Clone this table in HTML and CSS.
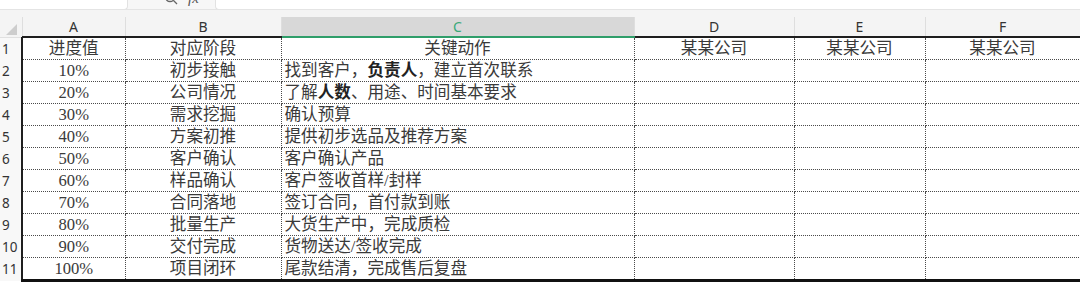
FILE: index.html
```html
<!DOCTYPE html>
<html lang="zh-CN">
<head>
<meta charset="utf-8">
<title>Sheet</title>
<link rel="stylesheet" href="styles.css">
</head>
<body>
<div class="toolbar">
  <div class="toolbar-inner">
    <div class="namebox">C17</div>
    <div class="fx-area">
      <svg class="search" width="14" height="14" viewBox="0 0 14 14"><circle cx="6" cy="6" r="4.5" fill="none" stroke="#666" stroke-width="1.3"/><line x1="9.3" y1="9.3" x2="13" y2="13" stroke="#666" stroke-width="1.3"/></svg>
      <span class="fx">fx</span>
    </div>
    <div class="formula"></div>
  </div>
</div>
<div class="band"></div>
<table class="sheet">
  <colgroup>
    <col class="c-rh"><col class="c-a"><col class="c-b"><col class="c-c"><col class="c-d"><col class="c-e"><col class="c-f">
  </colgroup>
  <thead>
    <tr class="colhead">
      <th class="corner"><span class="tri"></span></th>
      <th>A</th><th>B</th><th class="active">C</th><th>D</th><th>E</th><th>F</th>
    </tr>
  </thead>
  <tbody>
    <tr><td class="rh">1</td><td class="ctr">进度值</td><td class="ctr">对应阶段</td><td class="ctr">关键动作</td><td class="ctr">某某公司</td><td class="ctr">某某公司</td><td class="ctr">某某公司</td></tr>
    <tr><td class="rh">2</td><td class="ctr">10%</td><td class="ctr">初步接触</td><td class="txt">找到客户，<b>负责人</b>，建立首次联系</td><td></td><td></td><td></td></tr>
    <tr><td class="rh">3</td><td class="ctr">20%</td><td class="ctr">公司情况</td><td class="txt">了解<b>人数</b>、用途、时间基本要求</td><td></td><td></td><td></td></tr>
    <tr><td class="rh">4</td><td class="ctr">30%</td><td class="ctr">需求挖掘</td><td class="txt">确认预算</td><td></td><td></td><td></td></tr>
    <tr><td class="rh">5</td><td class="ctr">40%</td><td class="ctr">方案初推</td><td class="txt">提供初步选品及推荐方案</td><td></td><td></td><td></td></tr>
    <tr><td class="rh">6</td><td class="ctr">50%</td><td class="ctr">客户确认</td><td class="txt">客户确认产品</td><td></td><td></td><td></td></tr>
    <tr><td class="rh">7</td><td class="ctr">60%</td><td class="ctr">样品确认</td><td class="txt">客户签收首样/封样</td><td></td><td></td><td></td></tr>
    <tr><td class="rh">8</td><td class="ctr">70%</td><td class="ctr">合同落地</td><td class="txt">签订合同，首付款到账</td><td></td><td></td><td></td></tr>
    <tr><td class="rh">9</td><td class="ctr">80%</td><td class="ctr">批量生产</td><td class="txt">大货生产中，完成质检</td><td></td><td></td><td></td></tr>
    <tr><td class="rh">10</td><td class="ctr">90%</td><td class="ctr">交付完成</td><td class="txt">货物送达/签收完成</td><td></td><td></td><td></td></tr>
    <tr class="last"><td class="rh">11</td><td class="ctr">100%</td><td class="ctr">项目闭环</td><td class="txt">尾款结清，完成售后复盘</td><td></td><td></td><td></td></tr>
  </tbody>
</table>
</body>
</html>
```
FILE: styles.css
```css
html, body {
  margin: 0;
  padding: 0;
  background: #ffffff;
  overflow: hidden;
  width: 1080px;
  height: 283px;
}

.toolbar {
  height: 9px;
  overflow: hidden;
  background: #f7f7f7;
  border-bottom: 1px solid #e4e4e4;
}
.toolbar-inner {
  display: flex;
  height: 26px;
  margin-top: -16px;
  font-family: "Noto Sans", "Liberation Sans", sans-serif;
  font-size: 13px;
  color: #444;
}
.namebox {
  width: 128px;
  background: #fff;
  border-right: 1px solid #e2e2e2;
  border-bottom: 1px solid #e2e2e2;
  border-radius: 0 0 4px 0;
  text-align: center;
  line-height: 22px;
  box-sizing: border-box;
  padding-right: 20px;
}
.fx-area {
  width: 87px;
  display: flex;
  align-items: center;
  padding-left: 36px;
  gap: 10px;
  box-sizing: border-box;
  padding-top: 2px;
}
.fx {
  font-family: "Liberation Serif", serif;
  font-style: italic;
  font-size: 15px;
  color: #555;
}
.formula {
  flex: 1;
  background: #fff;
  border-left: 1px solid #e2e2e2;
  border-bottom: 1px solid #e2e2e2;
  border-radius: 0 0 0 4px;
}

.band {
  height: 7px;
  background: #f4f4f4;
}

.sheet {
  width: 1080px;
  table-layout: fixed;
  border-collapse: collapse;
  border-spacing: 0;
}
.c-rh { width: 22px; }
.c-a { width: 103px; }
.c-b { width: 156px; }
.c-c { width: 353px; }
.c-d { width: 160px; }
.c-e { width: 131px; }
.c-f { width: 155px; }

.colhead th {
  height: 18px;
  padding: 0;
  background: #f4f4f4;
  font-family: "Noto Sans", "Liberation Sans", sans-serif;
  font-weight: normal;
  font-size: 14px;
  line-height: 18px;
  color: #333;
  border-bottom: 2px solid #1e1e1e;
  border-left: 1px solid #dedede;
  padding-top: 1px;
}
.colhead th.corner {
  border-left: none;
  position: relative;
  border-bottom: 1px solid #e0e0e0;
}
.tri {
  position: absolute;
  left: 6px;
  bottom: 2px;
  width: 0;
  height: 0;
  border-left: 11px solid transparent;
  border-bottom: 11px solid #cdcdcd;
}
.colhead th.active {
  background: #d8d8d8;
  color: #3aa878;
  border-bottom: 2px solid #2f9e6a;
}

tbody td {
  height: 21px;
  padding: 0;
  border: 1px dotted #4a4a4a;
  font-family: "Liberation Serif", "Noto Sans CJK SC", serif;
  font-size: 16.6px;
  line-height: 20px;
  color: #3a3a3a;
  white-space: nowrap;
  overflow: hidden;
}
tbody td.rh {
  border: none;
  border-right: 2px solid #1e1e1e;
  background: #f8f8f8;
  font-family: "Noto Sans", "Liberation Sans", sans-serif;
  font-size: 13.5px;
  color: #333;
  padding-left: 2px;
  text-align: left;
}
tbody td.ctr { text-align: center; }
tbody td.txt { text-align: left; padding-left: 3px; }
tbody td b { font-weight: bold; color: #222; }
tbody tr.last td { border-bottom: 3px solid #111; }
tbody tr.last td.rh { border-bottom: none; }
tbody tr:first-child td { border-top: none; }
```
